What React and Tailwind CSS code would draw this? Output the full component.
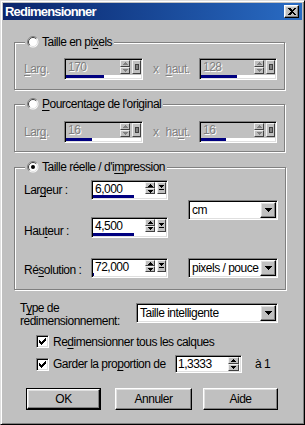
import React from "react";

const F = "font-['Liberation_Sans',Arial,sans-serif] tracking-[-0.5px]";
const DIS = "text-[#808080] [text-shadow:1px_1px_0_#fff]";

function Raised({ className = "", children }) {
  return (
    <div
      className={`box-border flex items-center justify-center border border-t-white border-l-white border-r-black border-b-black bg-[#c0c0c0] shadow-[inset_-1px_-1px_0_#808080,inset_1px_1px_0_#dfdfdf] ${className}`}
    >
      {children}
    </div>
  );
}

function SmallBtn({ className = "", children }) {
  return (
    <div
      className={`box-border flex items-center justify-center border border-t-[#f0f0f0] border-l-[#f0f0f0] border-r-[#404040] border-b-[#404040] bg-[#c0c0c0] ${className}`}
    >
      {children}
    </div>
  );
}

const SUNKEN =
  "border border-t-[#808080] border-l-[#808080] border-r-white border-b-white shadow-[inset_1px_1px_0_#000,inset_-1px_-1px_0_#dfdfdf] p-[1px]";

function Up({ c = "#000" }) {
  return (
    <svg width="5" height="3" viewBox="0 0 5 3" shapeRendering="crispEdges">
      <rect x="2" y="0" width="1" height="1" fill={c} />
      <rect x="1" y="1" width="3" height="1" fill={c} />
      <rect x="0" y="2" width="5" height="1" fill={c} />
    </svg>
  );
}
function Down({ c = "#000" }) {
  return (
    <svg width="5" height="3" viewBox="0 0 5 3" shapeRendering="crispEdges">
      <rect x="0" y="0" width="5" height="1" fill={c} />
      <rect x="1" y="1" width="3" height="1" fill={c} />
      <rect x="2" y="2" width="1" height="1" fill={c} />
    </svg>
  );
}
function DownBar() {
  return (
    <svg width="5" height="6" viewBox="0 0 5 6" shapeRendering="crispEdges">
      <rect x="0" y="0" width="5" height="1" fill="#000" />
      <rect x="1" y="1" width="3" height="1" fill="#000" />
      <rect x="2" y="2" width="1" height="1" fill="#000" />
      <rect x="0" y="4" width="5" height="1" fill="#000" />
    </svg>
  );
}
function Square() {
  return <div className="h-[6px] w-[4px] border border-[#404040] bg-[#808080]" />;
}
function DropTri() {
  return (
    <svg width="7" height="4" viewBox="0 0 7 4" shapeRendering="crispEdges">
      <rect x="0" y="0" width="7" height="1" fill="#000" />
      <rect x="1" y="1" width="5" height="1" fill="#000" />
      <rect x="2" y="2" width="3" height="1" fill="#000" />
      <rect x="3" y="3" width="1" height="1" fill="#000" />
    </svg>
  );
}

function Radio({ checked }) {
  return (
    <svg width="12" height="12" viewBox="0 0 12 12" className="shrink-0">
      <circle cx="6" cy="6" r="5.5" fill="#fff" />
      <path d="M2.1 9.9 A5.5 5.5 0 0 1 9.9 2.1" stroke="#808080" strokeWidth="1" fill="none" />
      <path d="M2.8 9.2 A4.5 4.5 0 0 1 9.2 2.8" stroke="#404040" strokeWidth="1" fill="none" />
      <path d="M9.2 2.8 A4.5 4.5 0 0 1 2.8 9.2" stroke="#dfdfdf" strokeWidth="1" fill="none" />
      {checked && <circle cx="6" cy="6" r="2" fill="#000" />}
    </svg>
  );
}

function Check() {
  return (
    <div className={`flex h-[13px] w-[13px] shrink-0 items-center justify-center bg-white ${SUNKEN}`}>
      <svg width="7" height="7" viewBox="0 0 7 7" shapeRendering="crispEdges">
        <path d="M0 2 V5 H1 V6 H2 V7 H3 V6 H4 V5 H5 V4 H6 V3 H7 V0 H6 V1 H5 V2 H4 V3 H3 V4 H2 V3 H1 V2 Z" fill="#000" />
      </svg>
    </div>
  );
}

function SpinBox({ w, h = "h-[22px]", value, pct, disabled }) {
  return (
    <div className={`flex flex-col ${w} ${h} ${disabled ? "bg-[#c0c0c0]" : "bg-white"} ${SUNKEN}`}>
      <div className="flex min-h-0 flex-1">
        <div
          className={`flex-1 pl-[2px] text-[12px] leading-[14px] ${disabled ? DIS : "text-black"}`}
        >
          {value}
        </div>
        <div className="flex w-[10px] flex-col">
          <SmallBtn className="flex-1">
            <Up c={disabled ? "#808080" : "#000"} />
          </SmallBtn>
          <SmallBtn className="flex-1">
            <Down c={disabled ? "#808080" : "#000"} />
          </SmallBtn>
        </div>
        <div className="w-[2px]" />
        <SmallBtn className="w-[9px]">{disabled ? <Square /> : <DownBar />}</SmallBtn>
      </div>
      <div className="mt-[1px] h-[3px] bg-white">
        <div className="h-full bg-[#000080]" style={{ width: pct + "%" }} />
      </div>
    </div>
  );
}

function Dropdown({ w, text }) {
  return (
    <div className={`flex h-[20px] ${w} bg-white ${SUNKEN}`}>
      <div className="flex flex-1 items-center overflow-hidden whitespace-nowrap pl-[2px] text-[12px] text-black">
        {text}
      </div>
      <Raised className="w-[16px]">
        <DropTri />
      </Raised>
    </div>
  );
}

function U({ children }) {
  return <span className="underline underline-offset-[2px]">{children}</span>;
}

function Group({ className = "", legend, checked, children }) {
  return (
    <fieldset
      className={`ml-[11px] w-[271px] border border-[#808080] pl-[9px] pr-[7px] shadow-[inset_1px_1px_0_#fff,1px_1px_0_#fff] ${className}`}
    >
      <legend className="ml-[1px] bg-[#c0c0c0] px-[2px]">
        <div className="flex h-[14px] items-center gap-[3px] text-[12px] text-black">
          <Radio checked={checked} />
          <span>{legend}</span>
        </div>
      </legend>
      {children}
    </fieldset>
  );
}

function PixelRow({ className, v1, p1, v2, p2, l1, l2 }) {
  return (
    <div className={`flex h-[22px] items-center text-[12px] ${className}`}>
      <span className={`w-[40px] ${DIS}`}>{l1}</span>
      <SpinBox w="w-[79px]" value={v1} pct={p1} disabled />
      <span className={`ml-[10px] ${DIS}`}>x</span>
      <span className={`ml-[7px] ${DIS}`}>{l2}</span>
      <SpinBox w="w-[78px] ml-auto" value={v2} pct={p2} disabled />
    </div>
  );
}

function Button({ w, children, def }) {
  const inner = (
    <Raised className={`h-full w-full text-[12px] text-black`}>{children}</Raised>
  );
  return def ? (
    <div className={`h-[22px] ${w} border border-black`}>{inner}</div>
  ) : (
    <div className={`h-[22px] ${w}`}>{inner}</div>
  );
}

export default function App() {
  return (
    <div
      className={`${F} flex h-[425px] w-[305px] flex-col overflow-hidden border border-t-[#dfdfdf] border-l-[#dfdfdf] border-r-black border-b-black bg-[#c0c0c0] p-[2px] shadow-[inset_1px_1px_0_#fff,inset_-1px_-1px_0_#808080] leading-[14px]`}
    >
      {/* Title bar */}
      <div className="flex h-[17px] shrink-0 items-center bg-linear-to-r from-[#0a246a] to-[#2a6cc4] pl-[2px] pr-[3px]">
        <span className="text-[13px] font-bold tracking-[-0.8px] text-white">Redimensionner</span>
        <Raised className="ml-auto h-[13px] w-[15px]">
          <svg width="8" height="7" viewBox="0 0 8 7" shapeRendering="crispEdges">
            <path d="M0 0 H2 L4 2 L6 0 H8 L5 3.5 L8 7 H6 L4 5 L2 7 H0 L3 3.5 Z" fill="#000" />
          </svg>
        </Raised>
      </div>

      {/* Group 1 */}
      <Group
        className="mt-[15px] pb-[9px]"
        legend={
          <>
            Taille en pi<U>x</U>els
          </>
        }
      >
        <PixelRow
          className="mt-[9px]"
          l1={
            <>
              <U>L</U>arg.
            </>
          }
          l2={
            <>
              <U>h</U>aut.
            </>
          }
          v1="170"
          p1={50}
          v2="128"
          p2={48}
        />
      </Group>

      {/* Group 2 */}
      <Group
        className="mt-[7px] pb-[8px]"
        legend={
          <>
            <U>P</U>ourcentage de l'original
          </>
        }
      >
        <PixelRow
          className="mt-[10px]"
          l1={
            <>
              Lar<U>g</U>.
            </>
          }
          l2={
            <>
              ha<U>u</U>t.
            </>
          }
          v1="16"
          p1={34}
          v2="16"
          p2={34}
        />
      </Group>

      {/* Group 3 */}
      <Group
        className="mt-[8px] pb-[11px]"
        checked
        legend={
          <>
            Taille réelle / d'i<U>m</U>pression
          </>
        }
      >
        <div className="mt-[6px] flex text-[12px] text-black">
          <div className="flex flex-col">
            <div className="flex h-[20px] items-center">
              <span className="w-[67px]">
                Lar<U>g</U>eur :
              </span>
              <SpinBox w="w-[77px]" h="h-[20px]" value="6,000" pct={56} />
            </div>
            <div className="mt-[17px] flex h-[21px] items-center">
              <span className="w-[67px] pt-[6px]">
                Hau<U>t</U>eur :
              </span>
              <SpinBox w="w-[77px]" h="h-[21px]" value="4,500" pct={56} />
            </div>
            <div className="mt-[20px] flex h-[20px] items-center">
              <span className="w-[67px] pt-[3px]">
                Ré<U>s</U>olution :
              </span>
              <SpinBox w="w-[77px]" h="h-[20px]" value="72,000" pct={2} />
            </div>
          </div>
          <div className="ml-[20px] flex flex-col">
            <div className="mt-[20px]">
              <Dropdown w="w-[90px]" text="cm" />
            </div>
            <div className="mt-auto">
              <Dropdown w="w-[90px]" text="pixels / pouce" />
            </div>
          </div>
        </div>
      </Group>

      {/* Type de redimensionnement */}
      <div className="mt-[13px] flex h-[26px] items-start text-[12px] text-black">
        <div className="-mt-[1px] ml-[17px] w-[116px] leading-[13px]">
          T<U>y</U>pe de
          <br />
          redimensionnement:
        </div>
        <Dropdown w="w-[142px]" text="Taille intelligente" />
      </div>

      {/* Checkbox 1 */}
      <div className="ml-[33px] mt-[6px] flex h-[13px] items-center gap-[4px] text-[12px] text-black">
        <Check />
        <span>
          Re<U>d</U>imensionner tous les calques
        </span>
      </div>

      {/* Checkbox 2 */}
      <div className="ml-[33px] mt-[7px] flex h-[18px] items-center text-[12px] text-black">
        <Check />
        <span className="ml-[4px] w-[122px] whitespace-nowrap">
          Garder la pro<U>p</U>ortion de
        </span>
        <div className={`flex h-[18px] w-[67px] bg-white ${SUNKEN}`}>
          <div className="flex flex-1 items-center pl-[1px] text-[12px]">1,3333</div>
          <div className="flex w-[11px] flex-col">
            <SmallBtn className="flex-1">
              <Up />
            </SmallBtn>
            <SmallBtn className="flex-1">
              <Down />
            </SmallBtn>
          </div>
          <div className="w-[1px]" />
        </div>
        <span className="ml-[13px]">à 1</span>
      </div>

      {/* Buttons */}
      <div className="ml-[23px] mt-[15px] flex">
        <Button w="w-[75px]" def>
          OK
        </Button>
        <div className="ml-[14px]">
          <Button w="w-[77px]">Annuler</Button>
        </div>
        <div className="ml-[11px]">
          <Button w="w-[75px]">Aide</Button>
        </div>
      </div>
    </div>
  );
}
